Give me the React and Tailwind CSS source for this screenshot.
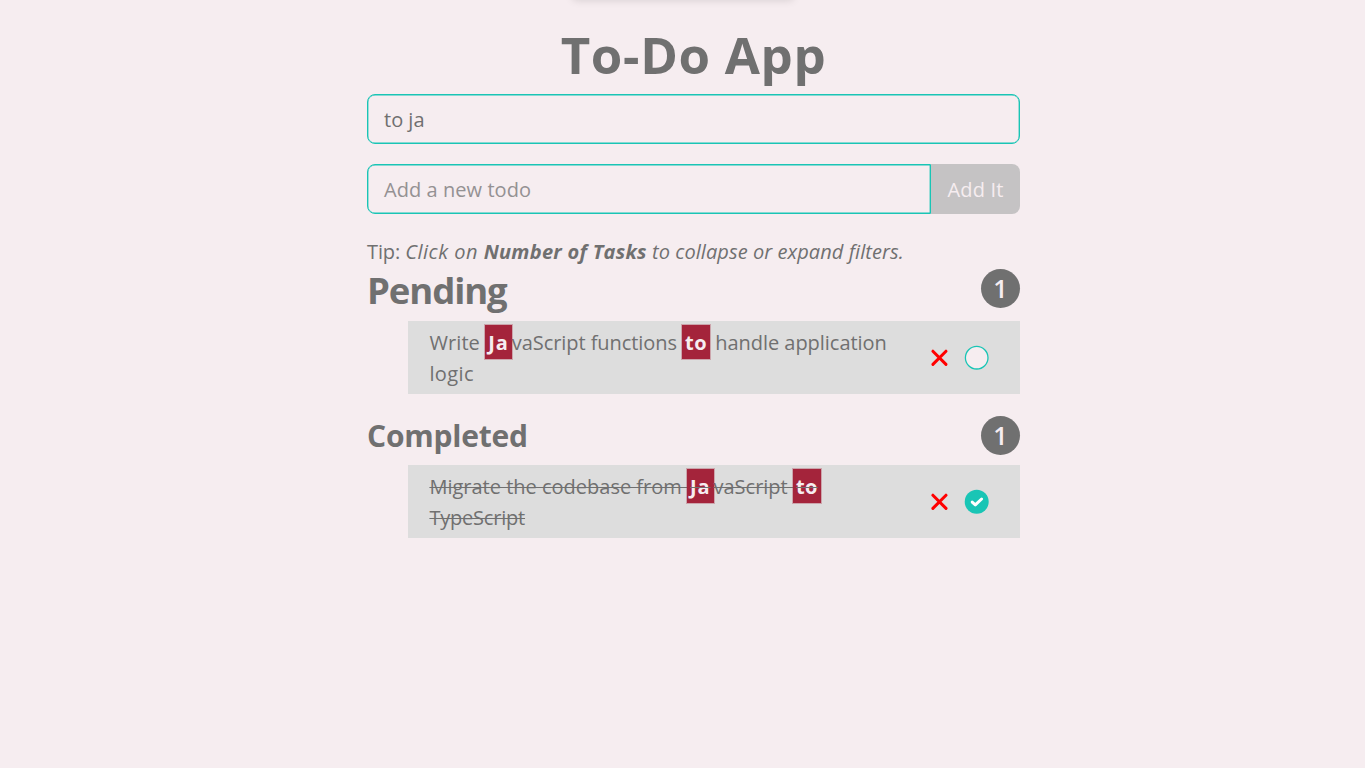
import React from 'react';

function Cross() {
  return (
    <svg className="h-[19px] w-[19px]" viewBox="0 0 19 19" fill="none" stroke="#ff0000" strokeWidth="3" strokeLinecap="round">
      <path d="M2.9 3.2 16 16.4M16 3.2 2.9 16.4" />
    </svg>
  );
}

function Mark({ children, className = '' }) {
  return <span className={`bg-[#a4243b] px-[3px] pt-[4px] pb-[3px] font-bold text-[#f6edf0] outline outline-1 outline-[#a4243b]/30 ${className}`}>{children}</span>;
}

function Count({ children }) {
  return (
    <span className="flex h-[39px] w-[39px] items-center justify-center rounded-full bg-[#707070] pt-px text-[25px] font-semibold text-[#f6edf0]">
      {children}
    </span>
  );
}

function Item({ children, done, className }) {
  return (
    <li className={`ml-[41px] flex h-[73px] w-[612px] items-center bg-[#dddddd] pl-[21.4px] ${className}`}>
      <div className={`w-[501px] whitespace-nowrap text-[20px] leading-[31px] ${done ? 'line-through decoration-[1.4px]' : ''}`}>{children}</div>
      <button className="flex w-[19px] items-center"><Cross /></button>
      <button className="ml-[14.6px]">
        <svg className="h-[25px] w-[25px]" viewBox="0 0 25 25">
          <circle cx="12.7" cy="12.7" r={done ? 12 : 11.3} fill={done ? '#19c5b5' : '#f6edf0'} stroke={done ? 'none' : '#19c5b5'} strokeWidth="1.3" />
          {done && <path d="M8.2 13.1 11.3 15.9 17.6 10" fill="none" stroke="#fff" strokeWidth="3" strokeLinecap="round" strokeLinejoin="round" />}
        </svg>
      </button>
    </li>
  );
}

export default function App() {
  return (
    <div className="h-[768px] w-full overflow-hidden bg-[#f6edf0] font-['Open_Sans','Noto_Sans',sans-serif] text-[20px] text-[#707070]">
      <div className="mx-auto -mt-[10px] h-[10px] w-[220px] shadow-[0_0_9px_rgba(0,0,0,0.14)]" />
      <main className="ml-[367px] w-[653px]">
        <h1 className="flex h-[94px] items-center justify-center pt-[14px] text-[51px] font-bold leading-none tracking-[0.65px]"><span>To-Do App</span></h1>
        <div className="flex h-[50px] items-center rounded-[8px] border border-[#19c5b5] pl-[16px] pt-px shadow-[inset_0_0_0_0.4px_#19c5b5]"><span>to ja</span></div>
        <div className="mt-[20px] flex h-[50px]">
          <div className="flex w-[564px] items-center rounded-l-[8px] border border-[#19c5b5] pl-[16px] pt-px text-[#949193] shadow-[inset_0_0_0_0.4px_#19c5b5]"><span className="tracking-[0.06px]">Add a new todo</span></div>
          <button className="flex flex-1 items-center justify-center rounded-r-[8px] bg-[#c5c3c4] pt-px text-[#f6edf0]"><span className="tracking-[0.2px]">Add It</span></button>
        </div>
        <p className="mt-[22px] h-[31px] whitespace-nowrap leading-[31px]">
          <span className="tracking-[-0.1px]">Tip: </span><i className="tracking-[0.5px]">Click on </i><i className="font-bold tracking-[0.27px]">Number of Tasks</i><i className="tracking-[0.07px]"> to collapse or expand filters.</i>
        </p>
        <div className="mt-[2px] flex h-[39px] items-center justify-between"><h2 className="pt-[3px] text-[36.5px] font-bold leading-[39px] tracking-[-1.1px]"><span>Pending</span></h2><Count>1</Count></div>
        <ul>
          <Item className="mt-[13px]">
            <span className="tracking-[0.1px]">Write </span><Mark className="tracking-[0.9px]">Ja</Mark><span className="tracking-[-0.06px]">vaScript functions </span><Mark className="tracking-[0.4px]">to</Mark><span className="tracking-[-0.03px]"> handle application</span><br /><span className="tracking-[0.4px]">logic</span>
          </Item>
        </ul>
        <div className="mt-[21px] flex h-[40px] items-center justify-between"><h3 className="pt-px text-[30px] font-bold leading-[39px] tracking-[-0.22px]"><span>Completed</span></h3><Count>1</Count></div>
        <ul>
          <Item done className="mt-[10px]">
            <span>Migrate the codebase from </span><Mark className="tracking-[0.9px]">Ja</Mark><span>vaScript </span><Mark className="tracking-[0.4px]">to</Mark><br /><span className="tracking-[-0.2px]">TypeScript</span>
          </Item>
        </ul>
      </main>
    </div>
  );
}
